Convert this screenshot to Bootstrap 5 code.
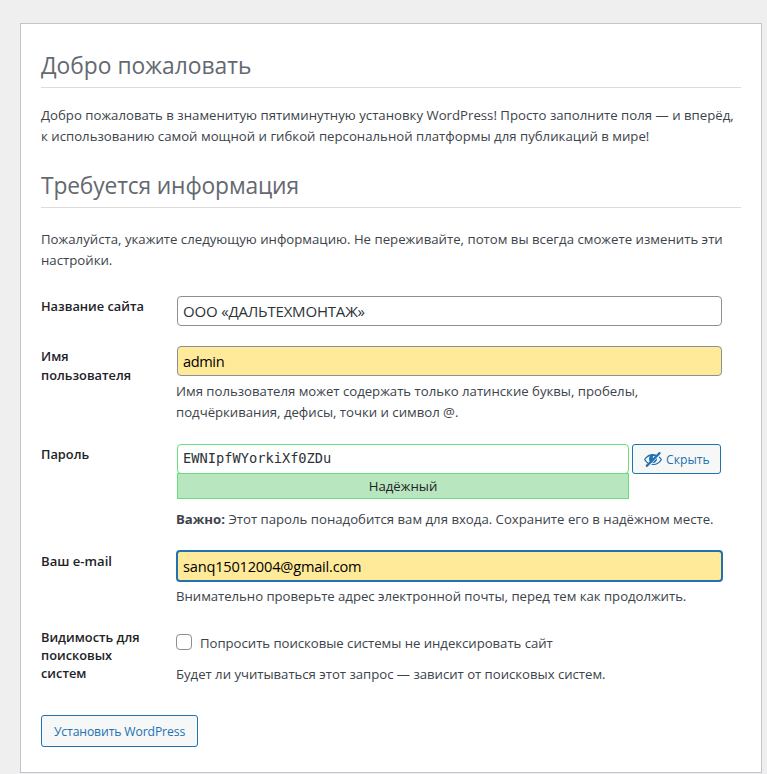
<!DOCTYPE html>
<html lang="ru">
<head>
<meta charset="utf-8">
<meta name="viewport" content="width=device-width, initial-scale=1">
<title>WordPress › Установка</title>
<link rel="stylesheet" href="https://cdn.jsdelivr.net/npm/bootstrap@5.3.0/dist/css/bootstrap.min.css">
<style>
body{background:#efefef;color:#3c434a;font-family:"Open Sans","Noto Sans",sans-serif;font-size:13.2px;line-height:21px;height:774px;overflow:hidden}
.setup{width:742px;height:750px;margin:23px 0 0 20px;padding:20px;background:#fff;border:1px solid #c3c4c7;white-space:nowrap}
.setup h1{font-size:22.8px;line-height:32px;font-weight:400;color:#646970;border-bottom:1px solid #dcdcde;height:44px;padding-top:6px;margin:0}
.setup .needed{letter-spacing:-.15px}
.intro{padding-top:17px;height:76px;letter-spacing:.01px}
.details{padding-top:21px;height:88px}
.field-row{display:grid;grid-template-columns:135px 546px}
.site{height:50px}
.user{height:98px}
.pass{height:106px}
.mail{height:80px}
.visibility{height:85px}
.field-name{font-weight:600;font-size:12.8px;line-height:19px;padding-top:1px;color:#1d2327}
.mail .field-name{font-size:13.1px;padding-top:2px}
.visibility .field-name{line-height:18px;margin-top:-3px}
.setup .form-control{height:30px;width:545px;margin-left:1px;padding:0 5px;border:1px solid #8c8f94;border-radius:4px;color:#2c3338;font-size:15px;line-height:28px;letter-spacing:-.19px;box-shadow:none}
.setup .autofill{background:#ffea99;color:#000;font-size:14.6px;letter-spacing:-.4px}
.setup .active-field{height:32px;width:547px;margin-left:0;padding:0 5px;border:2px solid #2271b1;letter-spacing:-.2px}
.setup .secret{width:452px;padding-bottom:2px;font-family:"DejaVu Sans Mono",monospace;font-size:13.7px;letter-spacing:0;border-color:#68de7c}
.strength{width:452px;height:26px;margin:-1px 0 0 1px;border:1px solid #68de7c;background:#b8e6bf;color:#1d2327;line-height:25px}
.setup .btn{border:1px solid #2271b1;border-radius:3px;background:#f6f7f7;color:#2271b1;font-size:12.2px}
.setup .toggle{width:89px;height:30px;margin-left:3px;padding:0 0 0 10px}
.toggle svg{margin-right:3px}
.toggle span{padding-top:2px}
.setup .install{width:157px;height:32px;padding:2px 0 0;font-size:12.2px;letter-spacing:-.12px}
.setup .form-check-input{width:16px;height:16px;margin:0 8px 0 0;border:1px solid #8c8f94;border-radius:4px}
.user .hint{padding-top:5px;letter-spacing:-.015px}
.important{padding-top:10px}
.mail .hint{padding-top:4px;letter-spacing:-.04px}
.visibility .hint{padding-top:10px;letter-spacing:-.03px}
.robots{padding-top:4px;letter-spacing:-.04px}
.robots span{margin-top:-1px}
</style>
</head>
<body>
<main class="setup">
<h1>Добро пожаловать</h1>
<p class="intro m-0">Добро пожаловать в знаменитую пятиминутную установку WordPress! Просто заполните поля — и вперёд,<br>к использованию самой мощной и гибкой персональной платформы для публикаций в мире!</p>
<h1 class="needed">Требуется информация</h1>
<p class="intro details m-0">Пожалуйста, укажите следующую информацию. Не переживайте, потом вы всегда сможете изменить эти<br>настройки.</p>
<form>
<div class="field-row site"><label class="field-name" for="title">Название сайта</label><div><input id="title" class="form-control" value="ООО «ДАЛЬТЕХМОНТАЖ»"></div></div>
<div class="field-row user"><label class="field-name" for="login">Имя<br>пользователя</label><div><input id="login" class="form-control autofill" value="admin"><div class="hint">Имя пользователя может содержать только латинские буквы, пробелы,<br>подчёркивания, дефисы, точки и символ @.</div></div></div>
<div class="field-row pass"><label class="field-name" for="secret">Пароль</label><div><div class="d-flex"><input id="secret" class="form-control secret" value="EWNIpfWYorkiXf0ZDu"><button type="button" class="btn toggle d-flex align-items-center"><svg width="20" height="20" viewBox="0 0 20 20" fill="currentColor" aria-hidden="true"><path d="M17.2 3.3l.16.17c.39.39.39 1.02 0 1.41L4.55 17.7c-.39.39-1.03.39-1.41 0l-.17-.17c-.39-.39-.39-1.02 0-1.41l1.59-1.6c-1.57-1-2.76-2.3-3.56-3.93.81-1.65 2.03-2.98 3.64-3.99S8.04 5.09 10 5.09c1.2 0 2.33.21 3.4.6l2.38-2.39c.39-.39 1.03-.39 1.42 0zm-7.09 4.01c-.23.25-.34.54-.34.88 0 .31.12.58.31.81l1.8-1.79c-.13-.12-.28-.21-.45-.26-.11-.01-.28-.03-.49-.04-.33.03-.6.16-.83.4zM2.4 10.59c.69 1.23 1.71 2.25 3.05 3.05l1.28-1.28c-.51-.69-.77-1.47-.77-2.36 0-1.06.36-1.98 1.09-2.76-1.04.27-1.96.7-2.76 1.26-.8.58-1.43 1.27-1.89 2.09zm13.22-2.13l.96-.96c1.02.86 1.83 1.89 2.42 3.09-.81 1.65-2.03 2.98-3.64 3.99s-3.4 1.51-5.36 1.51c-.63 0-1.24-.07-1.83-.18l1.07-1.07c.25.02.5.05.76.05 1.63 0 3.13-.4 4.5-1.21s2.4-1.84 3.1-3.09c-.49-.87-1.15-1.58-1.98-2.13zM9.2 13.94l4.7-4.7c.09.25.14.5.14.76 0 1.12-.39 2.08-1.18 2.86-.79.79-1.74 1.18-2.86 1.18-.28 0-.55-.03-.8-.1z"/></svg><span>Скрыть</span></button></div><div class="strength text-center">Надёжный</div><p class="important m-0"><strong>Важно:</strong> Этот пароль понадобится вам для входа. Сохраните его в надёжном месте.</p></div></div>
<div class="field-row mail"><label class="field-name" for="email">Ваш e-mail</label><div><input id="email" class="form-control autofill active-field" value="sanq15012004@gmail.com"><div class="hint">Внимательно проверьте адрес электронной почты, перед тем как продолжить.</div></div></div>
<div class="field-row visibility"><div class="field-name">Видимость для<br>поисковых<br>систем</div><div><label class="robots d-flex"><input type="checkbox" class="form-check-input"><span>Попросить поисковые системы не индексировать сайт</span></label><p class="hint m-0">Будет ли учитываться этот запрос — зависит от поисковых систем.</p></div></div>
<button type="button" class="btn install">Установить WordPress</button>
</form>
</main>
<script src="https://cdn.jsdelivr.net/npm/bootstrap@5.3.0/dist/js/bootstrap.bundle.min.js"></script>
</body>
</html>
